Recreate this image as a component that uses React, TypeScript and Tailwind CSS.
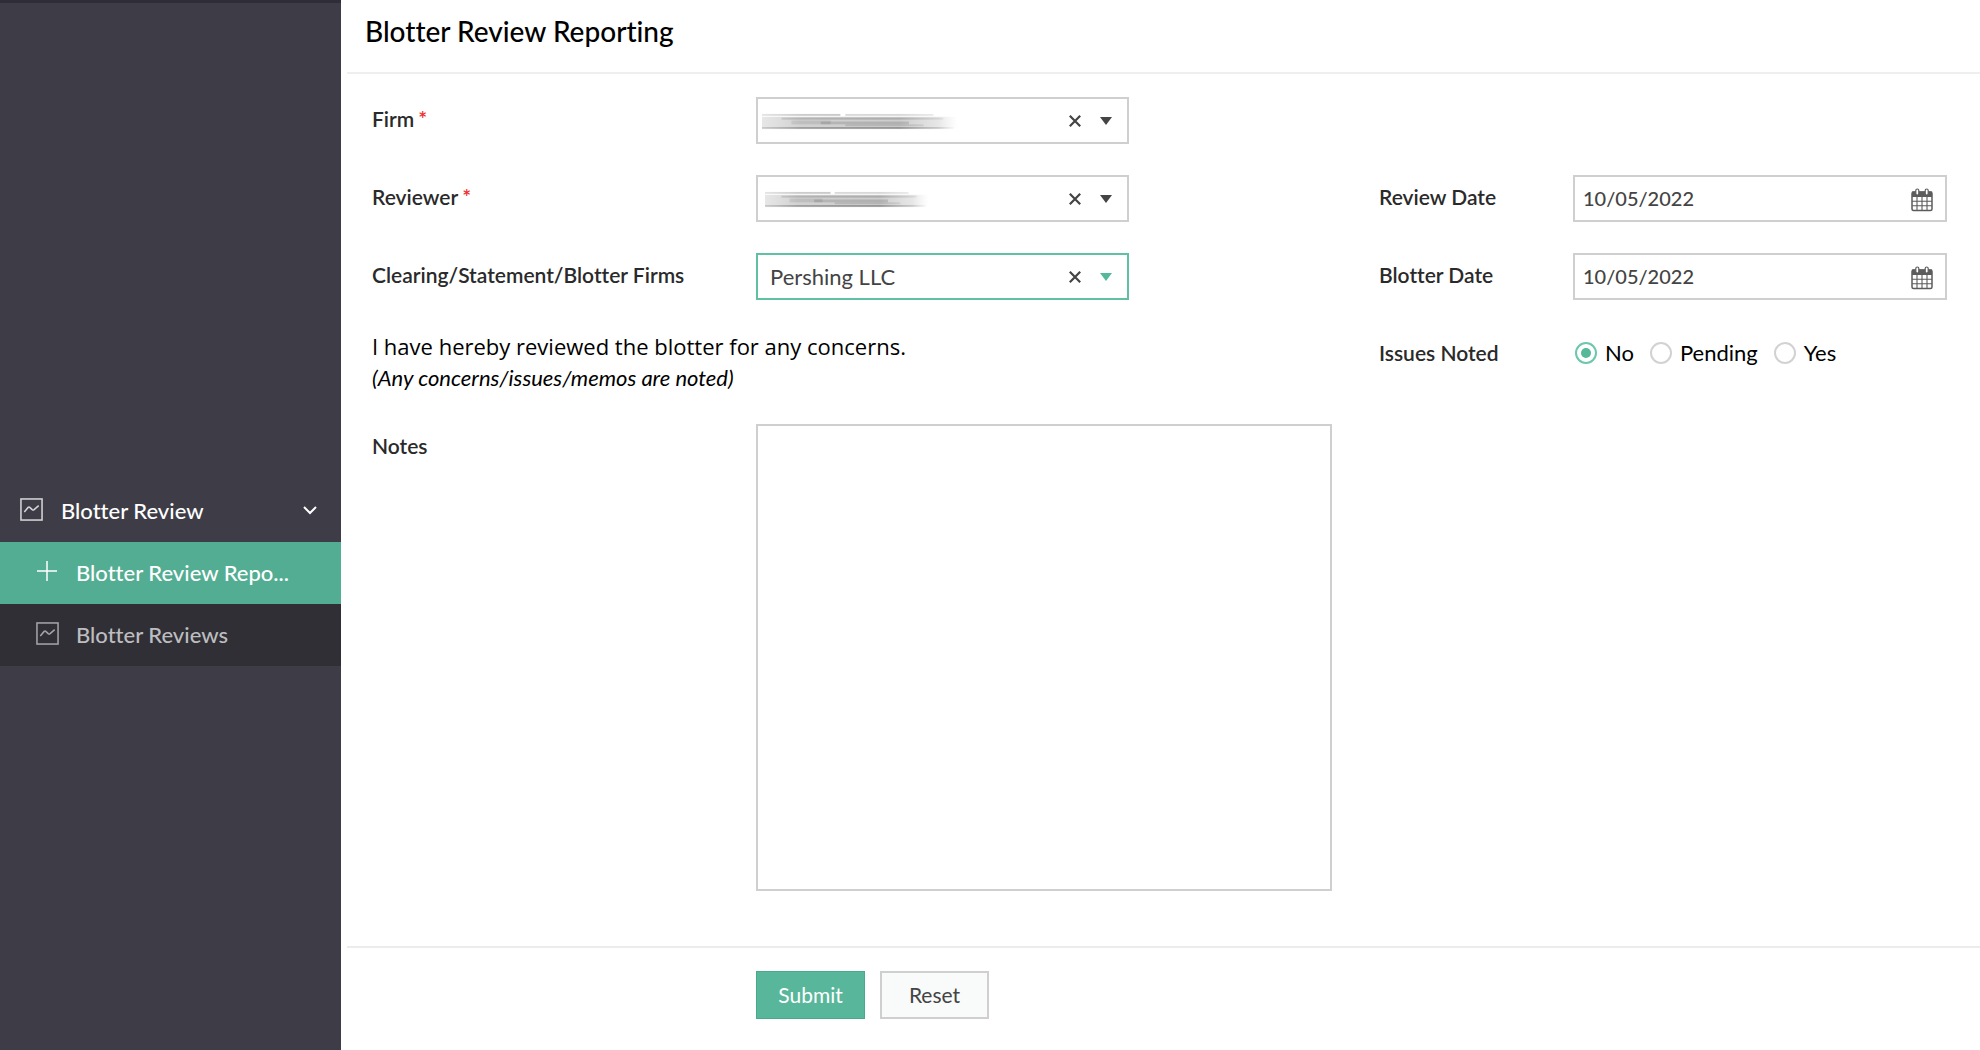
import { useState, type ReactNode } from "react";

function ChartIcon({ className }: { className: string }) {
  return (
    <svg viewBox="0 0 24 24" className={className} fill="none" stroke="currentColor" aria-hidden="true">
      <rect x="1" y="1" width="22" height="22" strokeWidth="1.6" />
      <path d="M4.5 14.5 8.5 9.8q1-.8 2 .2l2.200 2.100q1 .8 2 0L19.500 8" strokeWidth="1.6" />
    </svg>
  );
}

function CalendarIcon() {
  return (
    <svg viewBox="0 0 22 24" className="h-6 w-[22px]" fill="none" stroke="#5c5c5c" aria-hidden="true">
      <path d="M1 3.500h20V9H1z" fill="#5c5c5c" stroke="none" />
      <rect x="1" y="4" width="20" height="18.500" rx="1.500" strokeWidth="1.500" />
      <path d="M6 9v13M11 9v13M16 9v13M1 13.300h20M1 17.800h20" strokeWidth="1.100" />
      <rect x="4.800" y="1" width="3" height="6" rx="1.500" fill="#fff" strokeWidth="1.200" />
      <rect x="14.200" y="1" width="3" height="6" rx="1.500" fill="#fff" strokeWidth="1.200" />
    </svg>
  );
}

function Smudge({ className, id }: { className: string; id: string }) {
  return (
    <svg viewBox="0 0 200 18" preserveAspectRatio="none" className={className} aria-hidden="true">
      <defs>
        <linearGradient id={id} x1="0" x2="200" y1="0" y2="0" gradientUnits="userSpaceOnUse">
          <stop offset="0" stopColor="#666" stopOpacity="0.35" />
          <stop offset="0.2" stopColor="#555" stopOpacity="0.6" />
          <stop offset="0.7" stopColor="#444" stopOpacity="0.6" />
          <stop offset="0.9" stopColor="#666" stopOpacity="0.35" />
          <stop offset="1" stopColor="#999" stopOpacity="0" />
        </linearGradient>
      </defs>
      <g fill={`url(#${id})`}>
        <rect y="4" width="200" height="12" opacity="0.45" />
        <rect y="1" width="80" height="2" opacity="0.5" />
        <rect x="85" y="1" width="90" height="2" opacity="0.35" />
        <rect x="20" y="5" width="165" height="2" opacity="0.4" />
        <rect x="30" y="8" width="40" height="4" opacity="0.25" />
        <rect x="60" y="9" width="90" height="3" opacity="0.35" />
        <rect x="85" y="12" width="80" height="2" opacity="0.3" />
        <rect y="15" width="196" height="2" opacity="0.8" />
      </g>
    </svg>
  );
}

function Combo({
  id,
  options,
  active = false,
  children,
}: {
  id: string;
  options: string[];
  active?: boolean;
  children?: ReactNode;
}) {
  const [value, setValue] = useState(options[0]);
  return (
    <div className="relative w-[373px]">
      <select
        id={id}
        value={value}
        onChange={(e) => setValue(e.target.value)}
        className={
          active
            ? "h-[47px] w-full appearance-none border-2 border-[#5fc0a3] bg-white pl-3 pr-20 text-[22px] text-[#444] outline-none"
            : "h-[47px] w-full appearance-none border-2 border-[#cfcfcf] bg-white pl-3 pr-20 text-[22px] text-[#444] outline-none"
        }
      >
        {options.map((o) => (
          <option key={o} value={o}>
            {o}
          </option>
        ))}
        <option value="" />
      </select>
      {children}
      <button
        type="button"
        aria-label="Clear selection"
        onClick={() => setValue("")}
        className="absolute inset-y-0 right-12 flex items-center text-[#444]"
      >
        <svg viewBox="0 0 12 12" className="size-3" fill="none" stroke="currentColor" strokeWidth="2.200">
          <path d="M.8.8l10.400 10.400M11.200.8.8 11.200" />
        </svg>
      </button>
      <svg
        viewBox="0 0 12 8"
        className={
          active
            ? "pointer-events-none absolute right-[17px] top-5 h-2 w-3 text-[#55b89b]"
            : "pointer-events-none absolute right-[17px] top-5 h-2 w-3 text-[#444]"
        }
        fill="currentColor"
        aria-hidden="true"
      >
        <path d="M0 0h12L6 8z" />
      </svg>
    </div>
  );
}

const labelClass = "shrink-0 text-[21px] leading-6 font-semibold text-[#2a2a2a]";

function Required() {
  return <span className="ml-1 align-top text-[#f0302b]">*</span>;
}

function DateField({ id, label }: { id: string; label: string }) {
  return (
    <div className="flex">
      <label htmlFor={id} className={`${labelClass} w-[194px] pt-[10px]`}>
        {label}
      </label>
      <div className="relative flex-1">
        <input
          id={id}
          type="text"
          defaultValue="10/05/2022"
          className="h-[47px] w-full border-2 border-[#cfcfcf] bg-white px-2 pb-[2px] text-[20px] font-medium text-[#444] outline-none"
        />
        <button type="button" aria-label={`Choose ${label}`} className="absolute right-[14px] top-[13px]">
          <CalendarIcon />
        </button>
      </div>
    </div>
  );
}

function Sidebar() {
  return (
    <aside className="w-[341px] shrink-0 border-t-3 border-[#2f2e38] bg-[#3e3d47] text-[22px] font-medium">
      <nav className="mt-[478px]">
        <button type="button" className="flex h-[61px] w-full items-center pb-[2px] pl-5 pr-6 text-white">
          <ChartIcon className="mb-[2px] size-[23px] text-[#d5d5d8]" />
          <span className="ml-[18px]">Blotter Review</span>
          <svg viewBox="0 0 14 9" className="ml-auto h-[9px] w-[14px]" fill="none" stroke="currentColor" strokeWidth="2">
            <path d="M1 1l6 6 6-6" />
          </svg>
        </button>
        <a href="#reporting" className="flex h-[62px] items-center bg-[#53ad92] pb-[2px] pl-9 text-white">
          <svg viewBox="0 0 22 22" className="mb-[2px] size-[22px]" fill="none" stroke="currentColor" strokeWidth="1.500">
            <path d="M11 1v20M1 11h20" />
          </svg>
          <span className="ml-[18px]">Blotter Review Repo...</span>
        </a>
        <a href="#reviews" className="flex h-[62px] items-center bg-[#2f2f35] pb-[2px] pl-9 text-[#bdbdc0]">
          <ChartIcon className="mb-[2px] size-[23px] text-[#a5a5a8]" />
          <span className="ml-[17px]">Blotter Reviews</span>
        </a>
      </nav>
    </aside>
  );
}

export default function App() {
  const [issue, setIssue] = useState("No");
  return (
    <div className="flex min-h-screen bg-white font-['Lato',sans-serif] text-black [font-variant-ligatures:none]">
      <Sidebar />
      <main className="flex-1 pl-[6px]">
        <h1 className="h-18 pl-[18px] pt-[11px] text-[28px] leading-10 font-medium">Blotter Review Reporting</h1>
        <form onSubmit={(e) => e.preventDefault()} className="border-t-2 border-[#efefef]">
          <div className="flex items-start justify-between pb-[55px] pl-[25px] pr-[33px] pt-[23px]">
            <div>
              <div className="flex flex-col gap-[31px]">
                <div className="flex">
                  <label htmlFor="firm" className={`${labelClass} w-96 pt-[10px]`}>
                    Firm
                    <Required />
                  </label>
                  <Combo id="firm" options={[""]}>
                    <Smudge id="smudge-firm" className="pointer-events-none absolute left-[6px] top-4 h-[17px] w-[196px]" />
                  </Combo>
                </div>
                <div className="flex">
                  <label htmlFor="reviewer" className={`${labelClass} w-96 pt-[10px]`}>
                    Reviewer
                    <Required />
                  </label>
                  <Combo id="reviewer" options={[""]}>
                    <Smudge id="smudge-reviewer" className="pointer-events-none absolute left-[9px] top-4 h-[17px] w-[164px]" />
                  </Combo>
                </div>
                <div className="flex">
                  <label htmlFor="clearing" className={`${labelClass} w-96 pt-[10px]`}>
                    Clearing/Statement/Blotter Firms
                  </label>
                  <Combo id="clearing" options={["Pershing LLC"]} active />
                </div>
              </div>
              <div className="mt-[30px] leading-8">
                <p className="font-['Open_Sans',sans-serif] text-[22px]">
                  I have hereby reviewed the blotter for any concerns.
                </p>
                <p className="text-[22px] italic">(Any concerns/issues/memos are noted)</p>
              </div>
              <div className="mt-[30px] flex">
                <label htmlFor="notes" className={`${labelClass} w-96 pt-[10px]`}>
                  Notes
                </label>
                <textarea id="notes" className="h-[467px] w-[576px] resize-none border-2 border-[#cfcfcf] outline-none" />
              </div>
            </div>
            <div className="mt-[78px] flex w-[568px] flex-col gap-[31px]">
              <DateField id="review-date" label="Review Date" />
              <DateField id="blotter-date" label="Blotter Date" />
              <div role="radiogroup" aria-labelledby="issues-label" className="flex pt-[10px]">
                <span id="issues-label" className={`${labelClass} w-[194px]`}>
                  Issues Noted
                </span>
                <div className="flex items-center gap-4 pl-[2px]">
                  {["No", "Pending", "Yes"].map((o) => (
                    <label key={o} className="flex items-center gap-2 text-[22px] leading-6">
                      <input
                        type="radio"
                        name="issues"
                        value={o}
                        checked={issue === o}
                        onChange={() => setIssue(o)}
                        className="grid size-[22px] appearance-none place-content-center rounded-full border-2 border-[#d2d2d2] bg-white checked:border-[#6cc7ac] checked:before:size-[10px] checked:before:rounded-full checked:before:bg-[#55b89b] checked:before:content-['']"
                      />
                      {o}
                    </label>
                  ))}
                </div>
              </div>
            </div>
          </div>
          <div className="flex gap-[15px] border-t-2 border-[#ececec] pl-[409px] pt-[23px]">
            <button type="submit" className="h-12 w-[109px] border border-[#4aa88b] bg-[#58b79b] text-[21px] text-white">
              Submit
            </button>
            <button type="reset" className="h-12 w-[109px] border-2 border-[#cfcfcf] bg-[#f9fafa] text-[21px] text-[#444]">
              Reset
            </button>
          </div>
        </form>
      </main>
    </div>
  );
}
